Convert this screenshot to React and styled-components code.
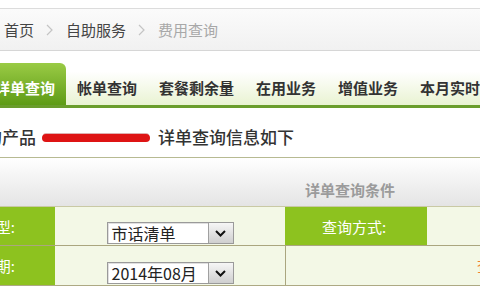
import React from "react"
import styled, { createGlobalStyle } from "styled-components"

const GlobalStyle = createGlobalStyle`
  html, body {
    margin: 0;
    padding: 0;
    background: #ffffff;
  }
  body {
    font-family: "Noto Sans CJK SC", "Noto Sans", sans-serif;
    overflow: hidden;
  }
`;

const Page = styled.div`
  width: 480px;
  height: 300px;
  overflow: hidden;
  background: #ffffff;
  padding-top: 8px;
  box-sizing: border-box;
`;

const Crumbs = styled.div`
  height: 41px;
  display: flex;
  align-items: center;
  padding-left: 4px;
  border-top: 1px solid #dcdcdc;
  border-bottom: 1px solid #d6d6d6;
  background: linear-gradient(#fbfbfb, #f1f1f1);
  font-size: 15px;
  color: #444;
`;

const Crumb = styled.span`
  color: ${(p) => (p.$current ? "#a8a8a8" : "#444")};
  line-height: 1;
`;

const CrumbSep = styled.span`
  display: flex;
  align-items: center;
  margin: 0 13px 0 12px;
`;

const TabBar = styled.div`
  margin-top: 12px;
  margin-left: -16px;
  height: 42px;
  display: flex;
  background: linear-gradient(#ffffff 20%, #e9f3d2);
  border-bottom: 3px solid #6a9d2c;
`;

const Tab = styled.div`
  display: flex;
  align-items: center;
  padding: 7px 11px 0;
  font-size: 15px;
  font-weight: 700;
  white-space: nowrap;
  color: ${(p) => (p.$active ? "#ffffff" : "#333")};
  background: ${(p) =>
    p.$active ? "linear-gradient(#9acb45, #5e9b16)" : "transparent"};
  border-radius: ${(p) => (p.$active ? "0 6px 0 0" : "0")};
`;

const Heading = styled.div`
  height: 50px;
  display: flex;
  align-items: center;
  padding-top: 8px;
  box-sizing: border-box;
  border-bottom: 1px solid #b7ba92;
  font-size: 17px;
  font-weight: 500;
  color: #333;
  white-space: nowrap;
`;

const HeadText = styled.span`
  margin-left: ${(p) => p.$shift || 0}px;
`;

const Redacted = styled.span`
  display: inline-block;
  width: 108px;
  height: 8px;
  margin: 2px 8px 0 6px;
  border-radius: 4px;
  background: #de1414;
  box-shadow: 0 -2px 0 -1px rgba(160, 30, 30, 0.35);
`;

const CondHeader = styled.div`
  height: 48px;
  display: flex;
  align-items: flex-end;
  padding: 0 0 6px 305px;
  box-sizing: border-box;
  background: linear-gradient(#ffffff, #e4e4e4);
  font-size: 15px;
  font-weight: 700;
  color: #9b9b9b;
`;

const Grid = styled.div`
  margin-left: -65px;
  width: 545px;
  display: grid;
  grid-template-columns: 120px 230px 142px 53px;
  grid-auto-rows: 39px;
  border-top: 1px solid #c9c9a4;
  border-bottom: 1px solid #ada983;
`;

const Label = styled.div`
  display: flex;
  align-items: center;
  justify-content: ${(p) => (p.$center ? "center" : "flex-end")};
  padding-right: ${(p) => (p.$center ? "4px" : "40px")};
  background: #8dc21f;
  color: #ffffff;
  font-size: 15px;
  white-space: nowrap;
  border-bottom: ${(p) => (p.$last ? "none" : "1px solid #aaa67f")};
`;

const Value = styled.div`
  display: flex;
  align-items: flex-end;
  justify-content: ${(p) => (p.$start ? "flex-start" : "center")};
  padding-bottom: 1px;
  background: #f3f8e6;
  grid-column: ${(p) => p.$span || "auto"};
  border-left: ${(p) => (p.$line ? "1px solid #aaa67f" : "none")};
  border-bottom: ${(p) => (p.$last ? "none" : "1px solid #aaa67f")};
  overflow: hidden;
`;

const Note = styled.div`
  align-self: center;
  flex-shrink: 0;
  margin-left: 191px;
  color: #f08030;
  font-size: 15px;
  white-space: nowrap;
`;

const Select = styled.div`
  width: 127px;
  height: 22px;
  display: flex;
  box-sizing: border-box;
  border: 1px solid #9a9a9a;
  background: #ffffff;
  box-shadow: inset 1px 1px 0 #e0e0e0;
`;

const SelectText = styled.div`
  flex: 1;
  padding-left: 4px;
  font-size: 16px;
  line-height: 20px;
  color: #222;
  white-space: nowrap;
  overflow: hidden;
`;

const SelectBtn = styled.div`
  width: 24px;
  display: flex;
  align-items: center;
  justify-content: center;
  border-left: 1px solid #a0a0a0;
  background: linear-gradient(#f6f6f6, #cfcfcf);
`;

const Chevron = () => (
  <svg width="11" height="7" viewBox="0 0 11 7">
    <polyline points="1,1 5.5,5.5 10,1" fill="none" stroke="#111" strokeWidth="2" />
  </svg>
);

const Arrow = () => (
  <svg width="7" height="12" viewBox="0 0 7 12">
    <polyline points="1,1 6,6 1,11" fill="none" stroke="#c4c4c4" strokeWidth="1.2" />
  </svg>
);

const DropDown = ({ value }) => (
  <Select>
    <SelectText>{value}</SelectText>
    <SelectBtn><Chevron /></SelectBtn>
  </Select>
);

const tabs = ["详单查询", "帐单查询", "套餐剩余量", "在用业务", "增值业务", "本月实时话费"];

const App = () => {
  return (
    <Page>
      <GlobalStyle />
      <Crumbs>
        <Crumb>首页</Crumb>
        <CrumbSep><Arrow /></CrumbSep>
        <Crumb>自助服务</Crumb>
        <CrumbSep><Arrow /></CrumbSep>
        <Crumb $current>费用查询</Crumb>
      </Crumbs>
      <TabBar>
        {tabs.map((t, i) => (
          <Tab key={t} $active={i === 0}>{t}</Tab>
        ))}
      </TabBar>
      <Heading>
        <HeadText $shift={-32}>您的产品</HeadText>
        <Redacted />
        <HeadText>详单查询信息如下</HeadText>
      </Heading>
      <CondHeader>详单查询条件</CondHeader>
      <Grid>
        <Label>清单类型:</Label>
        <Value><DropDown value="市话清单" /></Value>
        <Label $center>查询方式:</Label>
        <Value />
        <Label $last>查询日期:</Label>
        <Value $last><DropDown value="2014年08月" /></Value>
        <Value $last $line $start $span="span 2"><Note>查询</Note></Value>
      </Grid>
    </Page>
  );
};

export default App;
